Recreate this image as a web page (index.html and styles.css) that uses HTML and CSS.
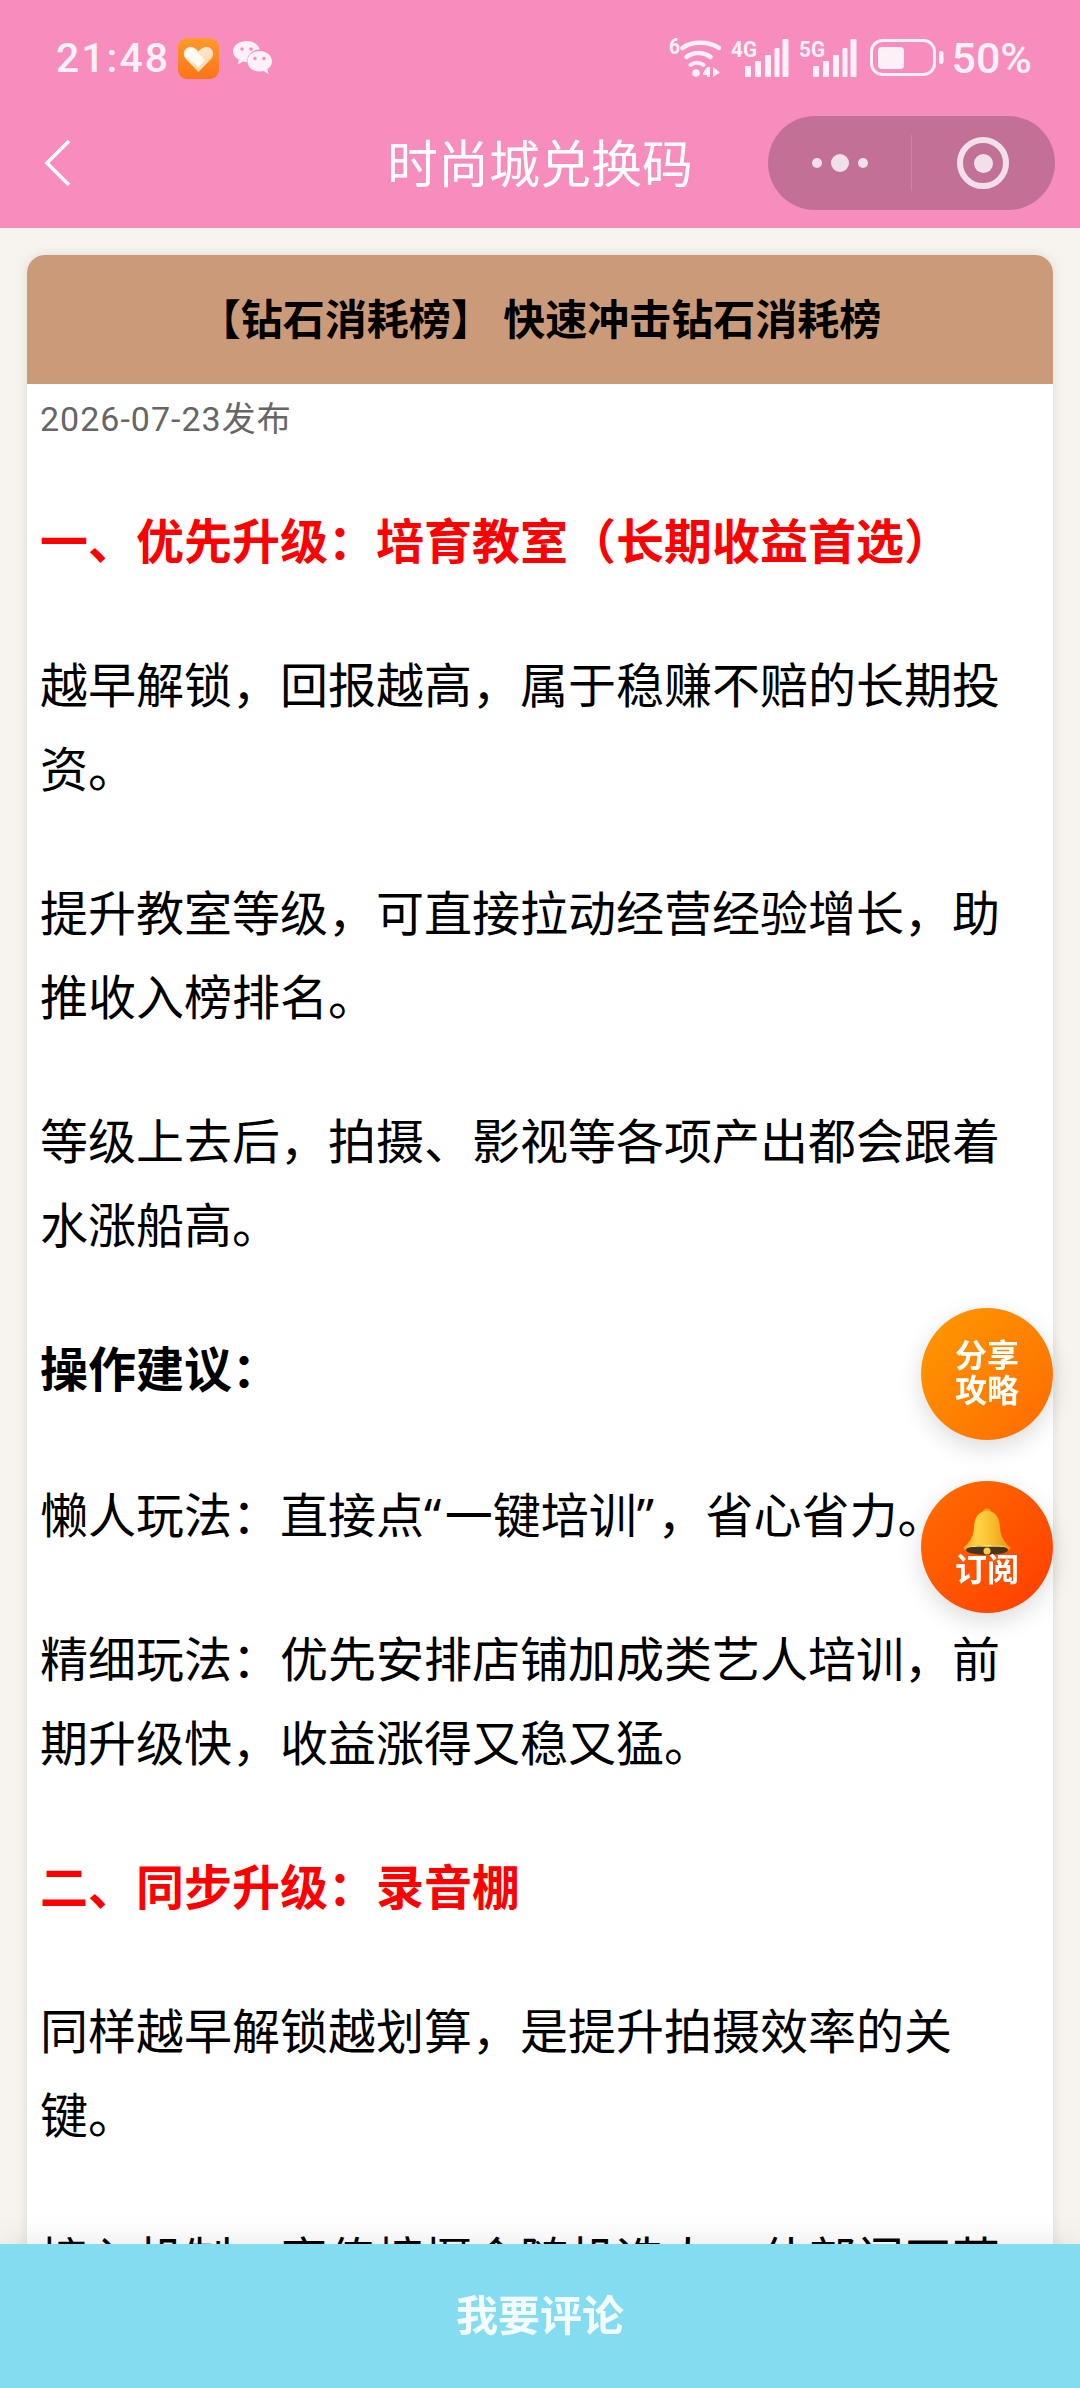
FILE: index.html
```html
<!DOCTYPE html>
<html lang="zh-CN">
<head>
    <meta charset="UTF-8">
    <meta name="viewport" content="width=device-width, initial-scale=1.0">
    <title>时尚城兑换码</title>
    <link rel="stylesheet" href="styles.css">
</head>
<body>
    <header class="top-bar">
        <div class="status-bar">
            <div class="status-left">
                <span class="clock">21:48</span>
                <svg class="app-icon" width="41" height="41" viewBox="0 0 41 41">
                    <defs>
                        <linearGradient id="appBg" x1="0" y1="0" x2="0" y2="1">
                            <stop offset="0" stop-color="#ff9a2c"/>
                            <stop offset="1" stop-color="#fb7417"/>
                        </linearGradient>
                        <linearGradient id="heartFill" x1="0" y1="0" x2="1" y2="1">
                            <stop offset="0" stop-color="#fff6ea"/>
                            <stop offset="1" stop-color="#fbcf9f"/>
                        </linearGradient>
                    </defs>
                    <rect width="41" height="41" rx="9" fill="url(#appBg)"/>
                    <path d="M20.5 34 L7.5 20.5 C3.5 15.5 7 9 12.5 9 C15.5 9 18 10.5 20.5 13.5 C23 10.5 25.5 9 28.5 9 C34 9 37.5 15.5 33.5 20.5 Z" fill="url(#heartFill)"/>
                    <path d="M8 12 C10 9 13.5 8.700 15.500 10.500 L27 22 L20.500 29 L8.500 18 C6.800 16.300 6.800 14 8 12 Z" fill="#fffaf3"/>
                </svg>
                <svg class="wechat-icon" width="39" height="34" viewBox="0 0 39 34">
                    <path d="M14 0 C21 0 27 4.500 27 10.500 C27 16.500 21 21 14 21 C12.500 21 11 20.800 9.700 20.400 L5 23.500 L5.800 18.600 C2.300 16.700 0 13.800 0 10.500 C0 4.500 6.300 0 14 0 Z" fill="#fdf1f7"/>
                    <circle cx="26.500" cy="21" r="12.500" fill="#f78dbd"/>
                    <path d="M26.500 10 C33.300 10 39 14.600 39 20.200 C39 23.400 37.200 26.200 34.400 28 L35.500 33 L30.600 30 C29.300 30.300 27.900 30.500 26.500 30.500 C19.700 30.500 14.500 26 14.500 20.200 C14.500 14.600 19.700 10 26.500 10 Z" fill="#fdf1f7"/>
                    <circle cx="9" cy="8" r="1.800" fill="#f78dbd"/>
                    <circle cx="18" cy="8" r="1.800" fill="#f78dbd"/>
                    <circle cx="22" cy="17.500" r="1.700" fill="#f78dbd"/>
                    <circle cx="31" cy="17.500" r="1.700" fill="#f78dbd"/>
                </svg>
            </div>
            <div class="status-right">
                <svg width="52" height="52" viewBox="0 -6 52 52">
                    <text x="0" y="16" class="net-label" textLength="11" lengthAdjust="spacingAndGlyphs">6</text>
                    <g fill="none" stroke="#fdf1f7" stroke-linecap="round">
                        <path d="M13.500 10 C22 3 40 3 50 10" stroke-width="4.500"/>
                        <path d="M17.500 19 C24 13.500 35 13.500 41.500 19" stroke-width="4.500"/>
                        <path d="M21.500 27 C25 24 31 24 34.500 27" stroke-width="4"/>
                    </g>
                    <circle cx="27" cy="35" r="3.800" fill="#fdf1f7"/>
                    <path d="M38 29 L38 39 L41 39 L41 29 Z M34 35 L38 29 L38 37 L34 37 Z M44 29 L51 34.500 L44 39 Z" fill="#fdf1f7"/>
                </svg>
                <svg width="58" height="50" viewBox="0 -6 58 50">
                    <text x="0" y="18" class="net-label" textLength="26" lengthAdjust="spacingAndGlyphs">4G</text>
                    <g fill="#fdf1f7">
                        <rect x="14" y="27" width="6" height="11" rx="1"/>
                        <rect x="24" y="22" width="6" height="16" rx="1"/>
                        <rect x="34" y="16" width="6" height="22" rx="1"/>
                        <rect x="43.500" y="9" width="5" height="29" rx="1"/>
                        <rect x="51.500" y="0" width="6" height="38" rx="1"/>
                    </g>
                </svg>
                <svg width="58" height="50" viewBox="0 -6 58 50">
                    <text x="0" y="18" class="net-label" textLength="26" lengthAdjust="spacingAndGlyphs">5G</text>
                    <g fill="#fdf1f7">
                        <rect x="14" y="27" width="6" height="11" rx="1"/>
                        <rect x="24" y="22" width="6" height="16" rx="1"/>
                        <rect x="34" y="16" width="6" height="22" rx="1"/>
                        <rect x="43.500" y="9" width="5" height="29" rx="1"/>
                        <rect x="51.500" y="0" width="6" height="38" rx="1"/>
                    </g>
                </svg>
                <svg class="battery" width="74" height="38" viewBox="0 0 74 38">
                    <rect x="1.500" y="1.500" width="63" height="34" rx="11" fill="none" stroke="#fdf1f7" stroke-width="3"/>
                    <rect x="8" y="8" width="26" height="22" rx="4" fill="#fdf1f7"/>
                    <rect x="69" y="12" width="4.500" height="13" rx="2" fill="#fdf1f7"/>
                </svg>
                <span class="percent">50%</span>
            </div>
        </div>
        <nav class="nav-bar">
            <svg class="back" width="30" height="50" viewBox="0 0 30 50">
                <path d="M25 3 L3 25 L25 47" fill="none" stroke="#fff" stroke-width="3.500"/>
            </svg>
            <h1 class="page-title">时尚城兑换码</h1>
            <div class="capsule">
                <div class="capsule-more">
                    <span class="dot"></span>
                    <span class="dot dot-big"></span>
                    <span class="dot"></span>
                </div>
                <div class="capsule-close">
                    <span class="ring"><span class="ring-core"></span></span>
                </div>
            </div>
        </nav>
    </header>

    <main class="card">
        <h2 class="card-title">【钻石消耗榜】 快速冲击钻石消耗榜</h2>
        <div class="article">
            <div class="pub-date">2026-07-23发布</div>
            <p class="red"><strong>一、优先升级：培育教室（长期收益首选）</strong></p>
            <p>越早解锁，回报越高，属于稳赚不赔的长期投资。</p>
            <p>提升教室等级，可直接拉动经营经验增长，助推收入榜排名。</p>
            <p>等级上去后，拍摄、影视等各项产出都会跟着水涨船高。</p>
            <p><strong>操作建议：</strong></p>
            <p>懒人玩法：直接点<span class="quote">“</span>一键培训<span class="quote">”</span>，省心省力。</p>
            <p>精细玩法：优先安排店铺加成类艺人培训，前期升级快，收益涨得又稳又猛。</p>
            <p class="red"><strong>二、同步升级：录音棚</strong></p>
            <p>同样越早解锁越划算，是提升拍摄效率的关键。</p>
            <p>接入机制：宣传榜摄会随机选人，什部门四营</p>
        </div>
    </main>

    <a class="float-btn btn-share">分享<br>攻略</a>
    <a class="float-btn btn-sub">
        <svg class="bell" width="52" height="50" viewBox="0 0 52 50">
            <defs>
                <linearGradient id="bellGold" x1="0" y1="0" x2="1" y2="0">
                    <stop offset="0" stop-color="#e8a51c"/>
                    <stop offset="0.3" stop-color="#ffd445"/>
                    <stop offset="0.65" stop-color="#f7b92a"/>
                    <stop offset="1" stop-color="#e09414"/>
                </linearGradient>
            </defs>
            <circle cx="26" cy="5" r="4.500" fill="#e8a020"/>
            <path d="M26 3 C35 3 38.500 10 39 19 C39.500 28 42 33 50 40 C45 45 36 46 26 46 C16 46 7 45 2 40 C10 33 12.500 28 13 19 C13.500 10 17 3 26 3 Z" fill="url(#bellGold)"/>
            <ellipse cx="26" cy="42" rx="21" ry="5" fill="#4a3420"/>
            <path d="M5 39.500 C12 36 40 36 47 39.500 C40 38.500 12 38.500 5 39.500 Z" fill="#ffdf66"/>
            <circle cx="26" cy="43" r="3.500" fill="#f9cf45"/>
        </svg>
        <span class="btn-sub-text">订阅</span>
    </a>

    <footer class="comment-bar">我要评论</footer>
</body>
</html>
```

FILE: styles.css
```css
* {
    box-sizing: border-box;
}

html, body {
    margin: 0;
    height: 2388px;
    overflow: hidden;
}

body {
    position: relative;
    width: 1080px;
    font-family: Roboto, "Noto Sans CJK SC", sans-serif;
    background-color: #f7f4ef;
    color: #000;
}

/* top area */
.top-bar {
    height: 228px;
    background-color: #f78dbd;
}

.status-bar {
    display: flex;
    justify-content: space-between;
    align-items: center;
    height: 116px;
    padding: 0 48px 0 56px;
    color: #fdf1f7;
}

.status-left {
    display: flex;
    align-items: center;
}

.clock {
    font-size: 41px;
    font-weight: 500;
    letter-spacing: 2px;
    margin-right: 8px;
}

.wechat-icon {
    margin-left: 14px;
}

.status-right {
    display: flex;
    align-items: center;
    gap: 10px;
}

.net-label {
    font-family: Roboto, sans-serif;
    font-size: 22px;
    font-weight: 700;
    fill: #fdf1f7;
}

.battery {
    margin-left: 3px;
}

.percent {
    font-size: 43px;
    font-weight: 500;
    margin-left: -3px;
}

.nav-bar {
    display: grid;
    grid-template-columns: 287px 1fr 287px;
    align-items: center;
    height: 94px;
    padding: 0 25px;
}

.back {
    margin-left: 19px;
}

.page-title {
    margin: -5px 0 0;
    font-size: 51px;
    font-weight: 400;
    color: #fff;
    text-align: center;
}

.capsule {
    display: flex;
    width: 287px;
    height: 94px;
    border-radius: 47px;
    background-color: #c27095;
}

.capsule-more, .capsule-close {
    display: flex;
    align-items: center;
    justify-content: center;
    flex: 1;
}

.capsule-more {
    gap: 9px;
    position: relative;
}

.capsule-more::after {
    content: "";
    position: absolute;
    right: 0;
    top: 19px;
    bottom: 19px;
    width: 1px;
    background-color: #cf83a6;
}

.dot {
    width: 10px;
    height: 10px;
    border-radius: 50%;
    background-color: #f1e0ea;
}

.dot-big {
    width: 18px;
    height: 18px;
}

.ring {
    display: flex;
    align-items: center;
    justify-content: center;
    width: 52px;
    height: 52px;
    border: 6px solid #f1e0ea;
    border-radius: 50%;
}

.ring-core {
    width: 19px;
    height: 19px;
    border-radius: 50%;
    background-color: #f1e0ea;
}

/* article card */
.card {
    margin: 27px 27px 0;
    background-color: #fff;
    border-radius: 18px 18px 0 0;
    box-shadow: 0 0 12px rgba(0, 0, 0, 0.1);
}

.card-title {
    display: flex;
    align-items: center;
    justify-content: center;
    margin: 0;
    height: 129px;
    padding-bottom: 7px;
    font-size: 42px;
    font-weight: 700;
    white-space: pre;
    background-color: #cb9b79;
    border-radius: 18px 18px 0 0;
}

.article {
    padding: 10px 13px 0;
    font-size: 48px;
    line-height: 84px;
}

.pub-date {
    font-size: 34px;
    line-height: 50px;
    letter-spacing: 1px;
    color: #666;
    margin-bottom: 57px;
}

.article p {
    margin: 0 0 60px;
}

.quote {
    font-family: "Noto Sans", sans-serif;
    letter-spacing: 3.5px;
}

.red {
    color: #f00;
}

/* floating buttons */
.float-btn {
    position: fixed;
    left: 921px;
    display: flex;
    flex-direction: column;
    align-items: center;
    justify-content: center;
    width: 132px;
    height: 132px;
    border-radius: 50%;
    color: #fff;
    font-size: 32px;
    font-weight: 700;
    line-height: 35px;
    text-align: center;
    box-shadow: 0 8px 24px rgba(0, 0, 0, 0.14);
}

.btn-share {
    top: 1308px;
    display: block;
    padding-top: 31px;
    background: linear-gradient(135deg, #ff9a00, #ff6a00);
}

.btn-sub {
    top: 1481px;
    background: linear-gradient(135deg, #ff6f00, #ff3c00);
}

.bell {
    margin-top: 20px;
}

.btn-sub-text {
    margin-top: -5px;
    margin-bottom: 19px;
}

/* bottom bar */
.comment-bar {
    position: fixed;
    left: 0;
    right: 0;
    bottom: 0;
    height: 144px;
    line-height: 146px;
    text-align: center;
    font-size: 42px;
    font-weight: 700;
    color: #f3fbfe;
    background-color: #84dcf1;
    box-shadow: 0 0 30px rgba(0, 0, 0, 0.1);
}
```
